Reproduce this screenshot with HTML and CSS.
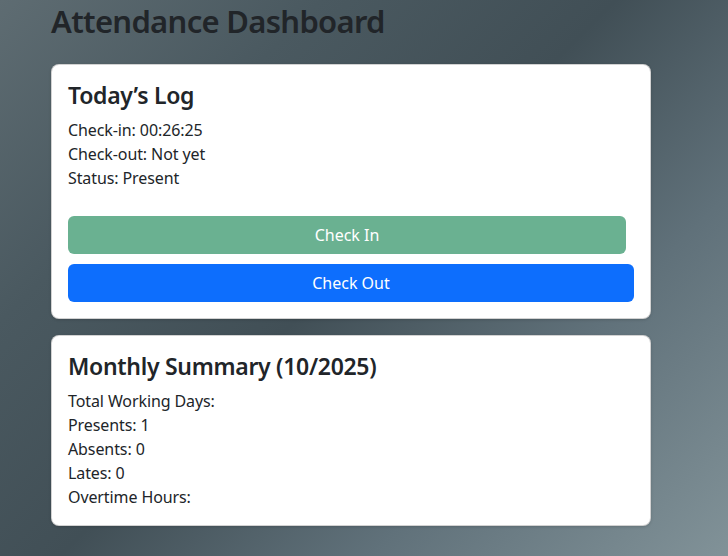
FILE: index.html
```html
<!DOCTYPE html>
<html lang="en">
<head>
<meta charset="utf-8">
<title>Attendance Dashboard</title>
<link rel="stylesheet" href="styles.css">
</head>
<body>
<main class="container">
  <h2 class="page-title">Attendance Dashboard</h2>

  <section class="card">
    <h4 class="card-title">Today’s Log</h4>
    <div class="info">
      <div>Check-in: 00:26:25</div>
      <div>Check-out: Not yet</div>
      <div>Status: Present</div>
    </div>
    <div class="actions">
      <button class="btn btn-success" disabled>Check In</button>
      <button class="btn btn-primary">Check Out</button>
    </div>
  </section>

  <section class="card">
    <h4 class="card-title">Monthly Summary (10/2025)</h4>
    <div class="info">
      <div>Total Working Days: </div>
      <div>Presents: 1</div>
      <div>Absents: 0</div>
      <div>Lates: 0</div>
      <div>Overtime Hours: </div>
    </div>
  </section>
</main>
</body>
</html>
```

FILE: styles.css
```css
* { box-sizing: border-box; }

html, body {
  margin: 0;
  height: 100%;
}

body {
  font-family: "Segoe UI", "Noto Sans", sans-serif;
  font-size: 16px;
  line-height: 1.5;
  color: #212529;
  background: linear-gradient(135deg, #5e6c72 0%, #4a5960 25%, #414f56 48%, #60717a 72%, #819298 100%);
  overflow: hidden;
}

.container {
  width: 600px;
  margin-left: 51px;
  padding-top: 2px;
  display: flex;
  flex-direction: column;
  gap: 16px;
}

.page-title {
  margin: 0 0 8px 0;
  font-size: 31px;
  font-weight: 600;
  letter-spacing: -0.7px;
  line-height: 1.24;
  color: #212529;
}

.card {
  background: #fff;
  border: 1px solid rgba(0, 0, 0, 0.175);
  border-radius: 8px;
  padding: 16px;
  box-shadow: 0 1px 3px rgba(0, 0, 0, 0.15);
}

.card-title {
  margin: 0 0 8px 0;
  font-size: 23px;
  font-weight: 600;
  letter-spacing: -0.3px;
  line-height: 1.25;
}

.info {
  letter-spacing: -0.1px;
}

.actions {
  margin-top: 26px;
  display: flex;
  flex-direction: column;
  gap: 10px;
}

.btn {
  font-family: inherit;
  font-size: 16px;
  line-height: 1.5;
  height: 38px;
  border: 1px solid transparent;
  border-radius: 6px;
  color: #fff;
  padding: 6px 12px;
  cursor: pointer;
}

.btn-success {
  background: #6ab191;
  margin-right: 8px;
}

.btn-primary {
  background: #0d6efd;
}
```
